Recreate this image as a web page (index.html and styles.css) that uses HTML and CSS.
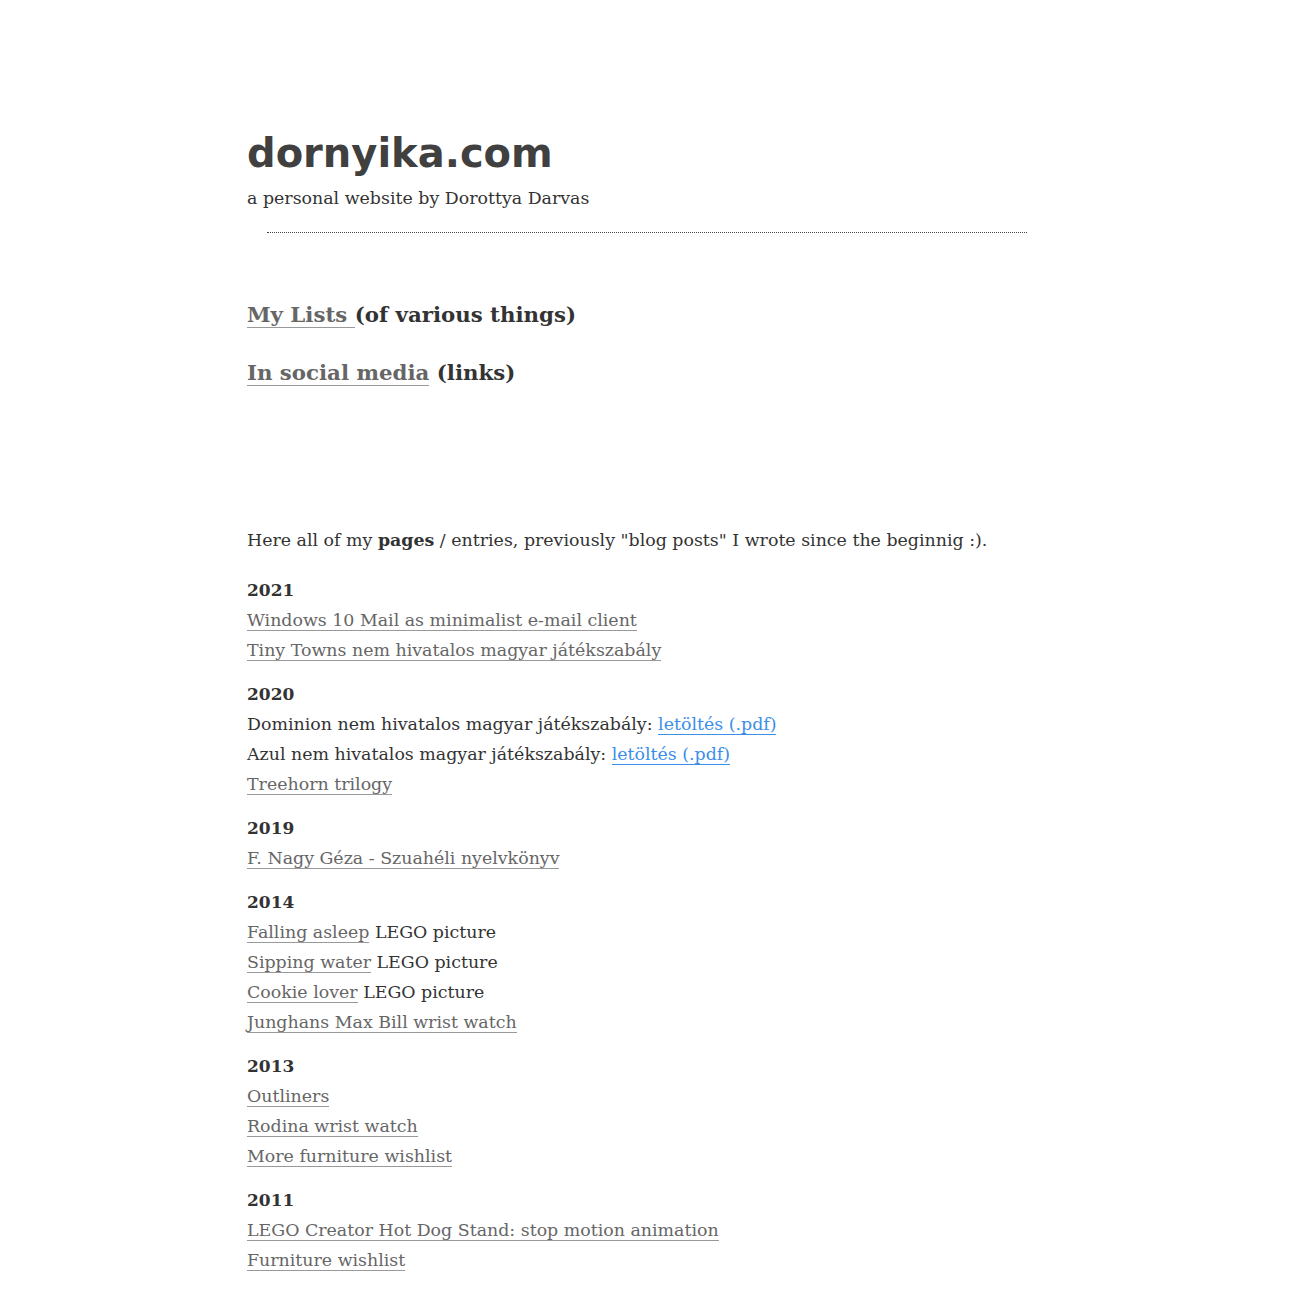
FILE: index.html
```html
<!DOCTYPE html>
<html lang="hu">

<head>
    <meta charset="UTF-8">
    <meta name="viewport" content="width=device-width, initial-scale=1.0">
    <title>dornyika.com</title>
    <link rel="stylesheet" href="styles.css">
</head>

<body>
    <div class="page">
        <header class="site-header">
            <h1 class="site-title">dornyika.com</h1>
            <p class="tagline">a personal website by Dorottya Darvas</p>
        </header>
        <hr class="rule">

        <nav class="sections">
            <h2><a href="#">My Lists </a>(of various things)</h2>
            <h2><a href="#">In social media</a> (links)</h2>
        </nav>

        <main class="entries">
            <p class="intro">Here all of my <strong>pages</strong> / entries, previously "blog posts" I wrote since the beginnig :).</p>

            <section class="year">
                <h3>2021</h3>
                <ul>
                    <li><a href="#">Windows 10 Mail as minimalist e-mail client</a></li>
                    <li><a href="#">Tiny Towns nem hivatalos magyar játékszabály</a></li>
                </ul>
            </section>

            <section class="year">
                <h3>2020</h3>
                <ul>
                    <li>Dominion nem hivatalos magyar játékszabály: <a class="download" href="#">letöltés (.pdf)</a></li>
                    <li>Azul nem hivatalos magyar játékszabály: <a class="download" href="#">letöltés (.pdf)</a></li>
                    <li><a href="#">Treehorn trilogy</a></li>
                </ul>
            </section>

            <section class="year">
                <h3>2019</h3>
                <ul>
                    <li><a href="#">F. Nagy Géza - Szuahéli nyelvkönyv</a></li>
                </ul>
            </section>

            <section class="year">
                <h3>2014</h3>
                <ul>
                    <li><a href="#">Falling asleep</a> LEGO picture</li>
                    <li><a href="#">Sipping water</a> LEGO picture</li>
                    <li><a href="#">Cookie lover</a> LEGO picture</li>
                    <li><a href="#">Junghans Max Bill wrist watch</a></li>
                </ul>
            </section>

            <section class="year">
                <h3>2013</h3>
                <ul>
                    <li><a href="#">Outliners</a></li>
                    <li><a href="#">Rodina wrist watch</a></li>
                    <li><a href="#">More furniture wishlist</a></li>
                </ul>
            </section>

            <section class="year">
                <h3>2011</h3>
                <ul>
                    <li><a href="#">LEGO Creator Hot Dog Stand: stop motion animation</a></li>
                    <li><a href="#">Furniture wishlist</a></li>
                </ul>
            </section>
        </main>
    </div>
</body>

</html>
```

FILE: styles.css
```css
* {
    margin: 0;
    padding: 0;
    box-sizing: border-box;
}

body {
    font-family: "DejaVu Serif", Georgia, serif;
    font-size: 17.4px;
    color: #333333;
    background: #ffffff;
}

.page {
    width: 806px;
    margin: 0 auto;
    padding: 129px 6px 40px 0;
}

a {
    color: #666666;
    text-decoration: none;
    border-bottom: 1px solid #999999;
}

.site-title {
    font-family: "DejaVu Sans", Verdana, sans-serif;
    font-size: 40px;
    font-weight: bold;
    color: #404040;
    line-height: 48px;
}

.tagline {
    line-height: 24px;
    margin-top: 9px;
}

.rule {
    border: none;
    border-top: 1px dotted #444444;
    margin: 22px 20px 0 20px;
}

.sections {
    padding-top: 67px;
}

.sections h2 {
    font-size: 21.3px;
    font-weight: bold;
    line-height: 30px;
    margin-bottom: 28px;
}

.entries {
    padding-top: 109px;
}

.intro {
    line-height: 30px;
    margin-bottom: 20px;
}

.year {
    margin-bottom: 14px;
}

.year h3 {
    font-size: 17px;
    font-weight: bold;
    line-height: 30px;
}

.year ul {
    list-style: none;
}

.year li {
    line-height: 30px;
}

.year a.download {
    color: #3b8eea;
    border-bottom-color: #3b8eea;
}
```
